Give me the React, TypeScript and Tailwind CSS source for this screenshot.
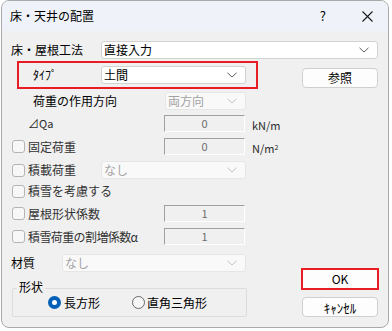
import React from "react";

const Chevron = ({ color = "#606060" }: { color?: string }) => (
  <svg width="10" height="6" viewBox="0 0 10 6" className="shrink-0">
    <path d="M0.5 0.8 L5 5 L9.5 0.8" fill="none" stroke={color} strokeWidth="1" />
  </svg>
);

const Combo = ({ text, className, disabled }: any) => (
  <div
    className={`flex items-center justify-between rounded-[3px] border px-[2px] pr-[8px] ${
      disabled
        ? "bg-[#f9f9f9] border-[#e6e6e6] text-[#a3a3a3]"
        : "bg-white border-[#d2d2d2] text-black"
    } ${className}`}
  >
    <span className="text-[12px] leading-none">{text}</span>
    <Chevron color={disabled ? "#c4c4c4" : "#606060"} />
  </div>
);

const Field = ({ value }: { value: string }) => (
  <div className="ml-[162px] flex h-[17px] w-[81px] items-center justify-center border-t border-l border-b border-r border-t-[#a0a0a0] border-l-[#a0a0a0] border-b-white border-r-white bg-[#f0f0f0] text-[11px] leading-none text-[#6e6e6e]">
    {value}
  </div>
);

const Check = () => (
  <div className="ml-[10px] mr-[3px] h-[13px] w-[13px] rounded-[3px] border border-[#b5b5b5] bg-[#f7f7f7]" />
);

export default function App() {
  return (
    <div className="h-[331px] w-[392px] bg-white font-['Noto_Sans_CJK_JP',sans-serif] text-black">
      <div className="ml-[1px] h-[328px] w-[388px] overflow-hidden rounded-[8px] border border-[#a9a9a9] bg-[#f0f0f0]">
        {/* title bar */}
        <div className="flex h-[30px] items-center bg-[#eff3f9] pl-[8px]">
          <span className="text-[12px]">床・天井の配置</span>
          <span className="ml-auto mr-[36px] text-[13px]">?</span>
          <svg width="11" height="11" viewBox="0 0 11 11" className="mr-[15px]">
            <path d="M0.5 0.5 L10.5 10.5 M10.5 0.5 L0.5 10.5" stroke="#1a1a1a" strokeWidth="1.1" />
          </svg>
        </div>

        {/* row 1 */}
        <div className="mt-[10px] flex h-[18px] items-center">
          <span className="w-[99px] pl-[9px] text-[12px]">床・屋根工法</span>
          <Combo text="直接入力" className="h-[18px] w-[277px]" />
        </div>

        {/* row 2 */}
        <div className="mt-[2px] flex h-[28px] items-start">
          <div className="ml-[15px] flex h-[28px] w-[241px] items-center border-2 border-[#e81c24]">
            <span className="w-[82px] pl-[14px] text-[12px]">ﾀｲﾌﾟ</span>
            <Combo text="土間" className="h-[18px] w-[145px]" />
          </div>
          <button className="ml-[44px] mt-[7px] flex h-[20px] w-[76px] items-center justify-center rounded-[4px] border border-[#d0d0d0] bg-[#fdfdfd] text-[12px] leading-none">
            参照
          </button>
        </div>

        {/* 荷重の作用方向 */}
        <div className="mt-[3px] flex h-[18px] items-center">
          <span className="w-[163px] pl-[31px] text-[12px]">荷重の作用方向</span>
          <Combo text="両方向" className="h-[18px] w-[81px]" disabled />
        </div>

        {/* ⊿Qa */}
        <div className="relative mt-[5px] flex h-[17px] items-center">
          <span className="absolute left-[26px] text-[11px] text-[#2a2a2a]">⊿Qa</span>
          <Field value="0" />
          <span className="ml-[7px] mt-[4px] text-[11px] text-[#2a2a2a]">kN/m</span>
        </div>

        {/* 固定荷重 */}
        <div className="relative mt-[6px] flex h-[17px] items-center">
          <div className="absolute left-0 flex items-center">
            <Check />
            <span className="text-[12px] text-[#333]">固定荷重</span>
          </div>
          <Field value="0" />
          <span className="ml-[7px] mt-[4px] text-[11px] text-[#2a2a2a]">
            N/m<sup className="text-[7px]">2</sup>
          </span>
        </div>

        {/* 積載荷重 */}
        <div className="mt-[6px] flex h-[18px] items-center">
          <div className="flex w-[99px] items-center">
            <Check />
            <span className="text-[12px] text-[#333]">積載荷重</span>
          </div>
          <Combo text="なし" className="h-[18px] w-[145px]" disabled />
        </div>

        {/* 積雪を考慮する */}
        <div className="mt-[3px] flex h-[18px] items-center">
          <Check />
          <span className="text-[12px] text-[#333]">積雪を考慮する</span>
        </div>

        {/* 屋根形状係数 */}
        <div className="relative mt-[5px] flex h-[17px] items-center">
          <div className="absolute left-0 flex items-center">
            <Check />
            <span className="text-[12px] text-[#333]">屋根形状係数</span>
          </div>
          <Field value="1" />
        </div>

        {/* 積雪荷重の割増係数α */}
        <div className="relative mt-[6px] flex h-[17px] items-center">
          <div className="absolute left-0 flex items-center">
            <Check />
            <span className="text-[12px] tracking-[-0.6px] text-[#333]">積雪荷重の割増係数α</span>
          </div>
          <Field value="1" />
        </div>

        {/* bottom section */}
        <div className="flex">
          <div className="w-[246px]">
            <div className="mt-[9px] flex h-[18px] items-center">
              <span className="w-[60px] pl-[9px] text-[12px]">材質</span>
              <Combo text="なし" className="h-[18px] w-[184px]" disabled />
            </div>
            <div className="relative ml-[10px] mt-[16px] flex h-[29px] w-[235px] items-center rounded-[2px] border border-[#dcdcdc]">
              <span className="absolute -top-[11px] left-[4px] bg-[#f0f0f0] px-[2px] text-[12px]">形状</span>
              <div className="ml-[35px] flex items-center">
                <div className="flex h-[13px] w-[13px] items-center justify-center rounded-full bg-[#005fb8]">
                  <div className="h-[5px] w-[5px] rounded-full bg-white" />
                </div>
                <span className="ml-[3px] text-[12px]">長方形</span>
              </div>
              <div className="ml-[32px] flex items-center">
                <div className="h-[13px] w-[13px] rounded-full border border-[#6a6a6a] bg-[#f5f5f5]" />
                <span className="ml-[2px] text-[12px]">直角三角形</span>
              </div>
            </div>
          </div>
          <div className="ml-[53px] flex flex-col">
            <button className="mt-[23px] flex h-[22px] w-[78px] items-center justify-center border-2 border-[#e81c24] bg-[#fdfdfd] text-[12px] leading-none">
              OK
            </button>
            <button className="ml-[1px] mt-[7px] flex h-[20px] w-[76px] items-center justify-center rounded-[4px] border border-[#d0d0d0] bg-[#fdfdfd] text-[13px] leading-none">
              ｷｬﾝｾﾙ
            </button>
          </div>
        </div>
      </div>
    </div>
  );
}
